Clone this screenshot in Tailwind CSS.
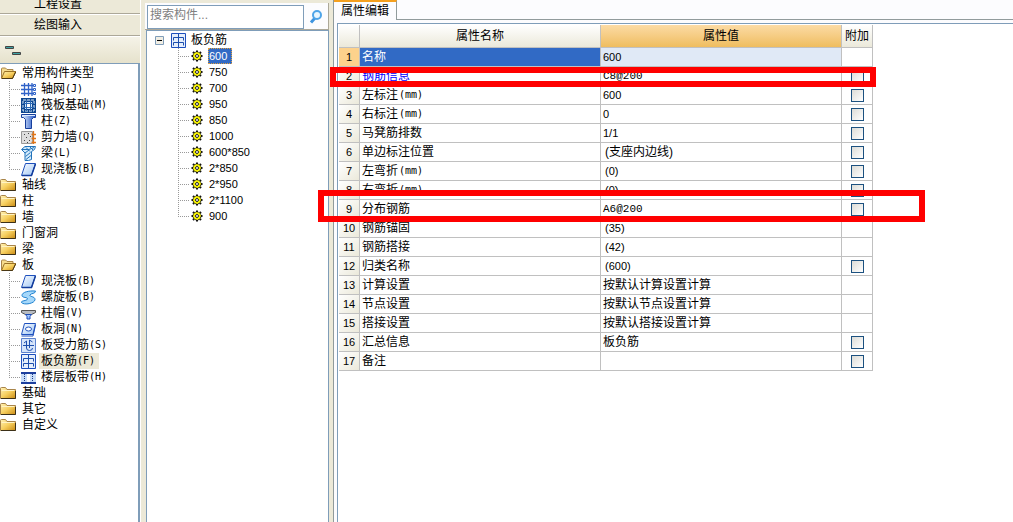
<!DOCTYPE html>
<html lang="zh-CN">
<head>
<meta charset="utf-8">
<title>属性编辑</title>
<script src="https://cdn.jsdelivr.net/npm/@tailwindcss/browser@4"></script>
</head>
<body class="h-screen overflow-hidden bg-[#ece9d8] font-['Liberation_Sans','Noto_Sans_CJK_SC',sans-serif] text-xs leading-4 text-black">

<svg class="absolute size-0">
  <defs>
    <linearGradient id="gold" x1="0" y1="0" x2="1" y2="1"><stop offset="0" stop-color="#fff2b8"/><stop offset=".5" stop-color="#f7cf5e"/><stop offset="1" stop-color="#c98a14"/></linearGradient>
    <linearGradient id="blue" x1="0" y1="0" x2="1" y2="1"><stop offset="0" stop-color="#fff"/><stop offset="1" stop-color="#9cc4f4"/></linearGradient>
    <linearGradient id="steel" x1="0" y1="0" x2="1" y2="0"><stop offset="0" stop-color="#eaf4ff"/><stop offset="1" stop-color="#1b4fc4"/></linearGradient>
  </defs>
  <symbol id="closed" viewBox="0 0 16 16"><path d="M.5 13.5v-10q0-1 1-1h4l1.500 2h8.500v9z" fill="url(#gold)" stroke="#a8844a"/><path d="M1 13.500h14.500V6" fill="none" stroke="#3c3018"/><path d="M1.500 5.500h13" stroke="#fff3c4"/></symbol>
  <symbol id="open" viewBox="0 0 16 16"><path d="M1.500 13V4q0-1 1-1h3l1.500 1.500h6V7" fill="#f6dc8e" stroke="#a8844a"/><path d="M1.500 13.500 4.500 6.500H16L12.500 13.500z" fill="url(#gold)" stroke="#9a7024"/><path d="M2 13.500h10.500L15.500 7" fill="none" stroke="#4a3816"/></symbol>
  <symbol id="axis" viewBox="0 0 15 15"><path d="M3.500 1v13M7.500 1v13M11 1v13M0 3.500h12M0 7.500h12M0 11.500h12" stroke="#2f62c8" stroke-width="1.300" fill="none"/><path d="M12.500 2.500h2v2h-2zM12.500 6.500h2v2h-2zM12.500 10.500h2v2h-2z" fill="#fff" stroke="#2f62c8"/></symbol>
  <symbol id="raft" viewBox="0 0 15 15"><path d="M0 0h15v15H0z" fill="#0d4690"/><path d="M2 2h11v11H2z" fill="none" stroke="#e4f1fd" stroke-dasharray="3 1"/><path d="M4 4h7v7H4z" fill="#cfe5fa"/><path d="M5.500 2v11M9.500 2v11M2 5.500h11M2 9.500h11" stroke="#2b68b4" fill="none"/><path d="M6 6h3v3H6z" fill="#fff"/></symbol>
  <symbol id="column" viewBox="0 0 15 15"><path d="M.5.500h14v3h-2l-2 2v9h-6v-9l-2-2h-2z" fill="url(#steel)" stroke="#173f9c"/><path d="M1 1.500h13" stroke="#dcecff"/></symbol>
  <symbol id="wall" viewBox="0 0 15 15"><path d="M.5 1.500h11v12H.5z" fill="#dedede" stroke="#999"/><path d="M3 4h1v1H3zM7 3h1v1H7zM5 7h1v1H5zM9 6h1v1H9zM3 10h1v1H3zM8 10h1v1H8zM6 12h1v1H6z" fill="#444"/><path d="M12.500 1v13M10.500 4.500H15M10.500 8.500H15M10.500 12.500H15" stroke="#e17518" stroke-width="1.300"/></symbol>
  <symbol id="beam" viewBox="0 0 15 15"><path d="M.5 3.500 4 .500h10.500l-1 3-3 2v8l-3 1H4V7z" fill="#d4ecfc" stroke="#2273bb"/><path d="M1 3.500h7l5-2M4 7l4-3M5 1.500l4 4M9 1l3 3M4.500 10.500l5-4M5 13.500l5-4" fill="none" stroke="#2273bb"/></symbol>
  <symbol id="slab" viewBox="0 0 15 15"><path d="M4.500 1.500h10l-4 12H.5z" fill="url(#blue)" stroke="#1e50bd"/><path d="M1 13.500h9.500l4-11.500" fill="none" stroke="#123c9c" stroke-width="1.500"/></symbol>
  <symbol id="spiral" viewBox="0 0 15 15"><path d="M14.500 1C8 .500 1 2 1 5.500 1 8 7 7 6.500 9 6 11-.5 10.500.5 12.500 3 15.500 14 13.500 14 9.500 14 6 8 7 9 5s5.500-1 5.500-4z" fill="#a6d8fa" stroke="#1c80d0"/></symbol>
  <symbol id="cap" viewBox="0 0 15 15"><path d="M.5 4.500h14v2l-4 2h-6l-4-2z" fill="#b8bcc2" stroke="#555"/><path d="M4.500 8.500h6l-1.500 2v2.500H6v-2.500z" fill="#9fc5ff" stroke="#1c4cb8"/></symbol>
  <symbol id="hole" viewBox="0 0 15 15"><path d="M3.500 1.500h11l-2.500 11H.5z" fill="url(#blue)" stroke="#1e50bd"/><path d="M.5 14h11.500l2.500-11" fill="none" stroke="#1e50bd"/><ellipse cx="7.500" cy="7" rx="3" ry="2" fill="#fff" stroke="#1e50bd"/></symbol>
  <symbol id="force" viewBox="0 0 15 15"><path d="M.5.500h14v14H.5z" fill="#d5e4fa" stroke="#5c82cf"/><path d="M2 7.500h11M5.500 3v7q0 2.500 3 2.500t3-2.500M8.500 2v8M3 5l2.500-2M8.500 2l3 2" fill="none" stroke="#1d4fae"/></symbol>
  <symbol id="neg" viewBox="0 0 15 15"><path d="M.5.500h14v14H.5z" fill="#e6effc" stroke="#1d4fbd"/><path d="M7.500 1v13M2.500 7.500v-3h10v3M2.500 12.500v-3h10v3" fill="none" stroke="#1d4fae"/></symbol>
  <symbol id="strip" viewBox="0 0 15 15"><path d="M0 4h15v9H0z" fill="#c8dcf7"/><path d="M0 3h15M0 13h15" stroke="#1d3f9e" stroke-width="2"/><path d="M3.500 4v8M11.500 4v8" stroke="#17398c" stroke-dasharray="1 1"/><path d="M7.500 4v8" stroke="#fff" stroke-width="3"/></symbol>
  <symbol id="gear" viewBox="0 0 12 12"><path d="M6 .500v11M.500 6h11M2 2l8 8M10 2l-8 8" stroke="#111" stroke-width="2"/><circle cx="6" cy="6" r="4" fill="#ff0" stroke="#222" stroke-dasharray="2 1"/><path d="M6 2v8M2 6h8" stroke="#e8d800"/><circle cx="6" cy="6" r="1.500" fill="#fff" stroke="#222"/></symbol>
</svg>

<div class="flex h-full">
  <aside class="flex w-[141px] shrink-0 flex-col border-r border-white">
    <button class="h-3.5 w-full shrink-0 border-b border-[#aca899] pr-6"><span class="-mt-1.5 block">工程设置</span></button>
    <button class="h-[22px] w-full shrink-0 border-t border-b border-t-white border-b-[#aca899] pr-6">绘图输入</button>
    <div class="flex h-[27px] shrink-0 border-t border-white bg-linear-to-b from-[#f5f3e8] to-[#e6e2cc]">
      <button aria-label="折叠全部" class="ml-[5px]"><svg width="16" height="16" viewBox="0 0 16 16"><path d="M.5 4.500h8v2h-8zM7.500 10.500h8v2h-8z" fill="#3fa5a5" stroke="#444"/></svg></button>
    </div>
    <nav class="min-h-0 flex-1 border-t border-r-2 border-[#7f9db9] bg-white pt-px"><ul id="types"></ul></nav>
  </aside>

  <section class="ml-1 flex w-[184px] shrink-0 flex-col pt-[3px]">
    <form class="flex h-[27px] shrink-0 border-r border-b border-[#aca899] bg-[#fcfcfe] pt-0.5 pl-0.5">
      <input type="text" aria-label="搜索构件" placeholder="搜索构件..." class="h-6 min-w-0 flex-1 border border-[#7f9db9] bg-white px-0.5 pb-1 placeholder:text-[#808080]">
      <button type="button" aria-label="搜索" class="flex w-6 items-center justify-center"><svg width="16" height="16" viewBox="0 0 16 16"><path d="M7 9 3 13.500" stroke="#3d94e0" stroke-width="3"/><circle cx="9" cy="6" r="4" fill="#e8f6ff" stroke="#4ea4e8" stroke-width="2"/></svg></button>
    </form>
    <div class="ml-px min-h-0 flex-1 border-x border-t border-[#7f9db9] bg-white pt-px">
      <div class="flex h-4 items-center pl-2">
        <button aria-label="收起" class="mr-[7px]"><svg width="9" height="9"><path d="M.5.500h8v8h-8z" fill="#f1eee4" stroke="#7f9db9"/><path d="M2 4.500h5" stroke="#000"/></svg></button>
        <svg width="15" height="15"><use href="#neg"/></svg><span class="ml-[5px]">板负筋</span>
      </div>
      <ul id="items"></ul>
    </div>
  </section>

  <main class="ml-1 flex min-w-0 flex-1 flex-col border-l border-[#919b9c] bg-[#fcfcfe]">
    <div class="flex h-5 shrink-0">
      <button class="w-[63px] border-t-2 border-r border-t-[#f5a01e] border-r-[#919b9c] bg-[#fcfcfe]">属性编辑</button>
      <div class="flex-1 border-b border-[#919b9c]"></div>
    </div>
    <div class="mt-[3px] ml-[3px] min-h-0 flex-1 border-t border-l border-[#7f9db9] bg-white pt-px pl-px">
      <div class="relative w-[534px]">
        <table class="w-full table-fixed border-separate border-spacing-0">
          <colgroup><col class="w-[21px]"><col><col><col class="w-[31px]"></colgroup>
          <thead>
            <tr class="h-[23px]">
              <th class="border-r border-b border-[#c0c0c0] bg-linear-to-b from-white to-[#ebe9da] p-0"></th>
              <th class="border-r border-b border-[#c0c0c0] bg-linear-to-b from-white to-[#ebe9da] p-0 font-normal">属性名称</th>
              <th class="border-r border-b border-[#c0c0c0] bg-linear-to-b from-[#fcdba4] to-[#efbd5e] p-0 font-normal">属性值</th>
              <th class="border-r border-b border-[#c0c0c0] bg-linear-to-b from-white to-[#ebe9da] p-0 font-normal">附加</th>
            </tr>
          </thead>
          <tbody id="props"></tbody>
        </table>
        <div class="pointer-events-none absolute top-[42px] -left-[9px] h-5 w-[546px] border-6 border-[#f00]"></div>
        <div class="pointer-events-none absolute top-[165px] -left-[21px] h-8 w-[607px] border-6 border-[#f00]"></div>
      </div>
    </div>
  </main>
</div>

<script>
const icon = (id, n) => `<svg class="shrink-0" width="${n}" height="${n}"><use href="#${id}"/></svg>`;
const joint = (last, w) => `<svg class="shrink-0" width="${w}" height="16"><path d="M.5 0V${last ? 9 : 16}M2 8.500H${w}" fill="none" stroke="#999" stroke-dasharray="1 1"/></svg>`;

const tree = [
  ['常用构件类型', [['axis','轴网','J'],['raft','筏板基础','M'],['column','柱','Z'],['wall','剪力墙','Q'],['beam','梁','L'],['slab','现浇板','B']]],
  ['轴线'],['柱'],['墙'],['门窗洞'],['梁'],
  ['板', [['slab','现浇板','B'],['spiral','螺旋板','B'],['cap','柱帽','V'],['hole','板洞','N'],['force','板受力筋','S'],['neg','板负筋','F'],['strip','楼层板带','H']]],
  ['基础'],['其它'],['自定义'],
];
document.getElementById('types').innerHTML = tree.map(([name, kids]) => `
  <li><button class="flex h-4 items-center">${icon(kids ? 'open' : 'closed', 16)}<span class="ml-1.5">${name}</span></button>
  ${kids ? `<ul>${kids.map(([ic, label, key], i) => `
    <li class="flex h-4 items-center pl-[9px]">${joint(i === kids.length - 1, 12)}${icon(ic, 15)}<button class="ml-[3px] flex items-center pl-0.5 pr-1 ${ic === 'neg' ? 'bg-[#ece9d8]' : ''}">${label}<span class="font-['DejaVu_Sans_Mono',monospace] text-[10px] leading-4">(${key})</span></button></li>`).join('')}</ul>` : ''}
  </li>`).join('');

const items = ['600','750','700','950','850','1000','600*850','2*850','2*950','2*1100','900'];
document.getElementById('items').innerHTML = items.map((t, i) => `
  <li class="flex h-4 items-center pl-[31px]">${joint(i === items.length - 1, 12)}<span class="w-px"></span>${icon('gear', 12)}<button class="ml-[5px] h-4 border border-dotted pr-1 text-[11px] leading-3.5 ${i ? 'border-transparent' : 'border-[#e0a040] bg-[#316ac5] text-white'}">${t}</button></li>`).join('');

const props = [['名称','600',0],['钢筋信息','C8@200',1],['左标注(mm)','600',1],['右标注(mm)','0',1],['马凳筋排数','1/1',1],['单边标注位置','(支座内边线)',1],['左弯折(mm)','(0)',1],['右弯折(mm)','(0)',1],['分布钢筋','A6@200',1],['钢筋锚固','(35)',0],['钢筋搭接','(42)',0],['归类名称','(600)',1],['计算设置','按默认计算设置计算',0],['节点设置','按默认节点设置计算',0],['搭接设置','按默认搭接设置计算',0],['汇总信息','板负筋',1],['备注','',1]];
const valueClass = v => /@/.test(v) ? "font-['Liberation_Mono',monospace] text-[11px]" : /[\u4e00-\u9fff]/.test(v) ? (v[0] === '(' ? 'pl-0.5' : '') : (v[0] === '(' ? 'pl-0.5 text-[11px]' : 'text-[11px]');
document.getElementById('props').innerHTML = props.map(([name, value, box], i) => `
  <tr class="h-[19px] leading-4">
    <th scope="row" class="border-r border-b border-[#c0c0c0] p-0 text-[11px] font-normal ${i ? 'bg-linear-to-br from-white to-[#ebe9da]' : 'bg-[#fdd28c]'}">${i + 1}</th>
    <td class="border-r border-b border-[#c0c0c0] p-0 pl-0.5 ${i === 0 ? 'bg-[#316ac5] text-white' : i === 1 ? 'text-[#00f]' : ''}"><div class="flex h-4 items-center">${name.replace('(mm)', '<span class="ml-px font-[\'DejaVu_Sans_Mono\',monospace] text-[10px]">(mm)</span>')}</div></td>
    <td class="border-r border-b border-[#c0c0c0] p-0 pl-0.5 ${i ? '' : 'bg-[#e0e9f6]'}"><div class="h-4 ${valueClass(value)}">${value}</div></td>
    <td class="border-r border-b border-[#c0c0c0] p-0">${box ? `<input type="checkbox" aria-label="附加 ${name}" class="mx-auto block size-[13px] appearance-none border border-[#1c5180] bg-linear-to-br from-[#dcdcd7] to-white">` : ''}</td>
  </tr>`).join('');
</script>
</body>
</html>
